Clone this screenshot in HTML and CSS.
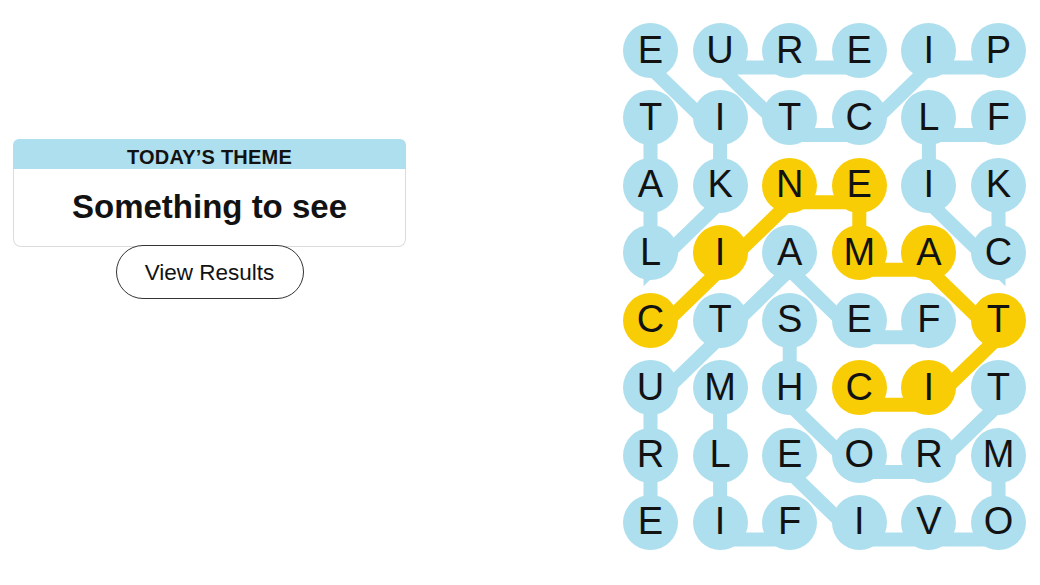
FILE: index.html
```html
<!DOCTYPE html>
<html lang="en">
<head>
  <meta charset="UTF-8">
  <title>Strands</title>
  <link rel="stylesheet" href="styles.css">
</head>
<body>
  <div id="game">
    <!-- Tema del día -->
    <div id="theme-panel">
      <div class="theme-card">
        <div class="theme-label">TODAY’S THEME</div>
        <div class="theme-title">Something to see</div>
      </div>
      <button class="results-button">View Results</button>
    </div>

    <!-- Tablero -->
    <div id="board">
      <svg class="paths" width="403" height="527" viewBox="0 0 403 527">
        <polyline class="path" points="27.5,111.93 27.5,179.36 27.5,246.79 97.1,179.36 97.1,111.93 27.5,44.5"/>
        <polyline class="path" points="375.5,111.93 305.9,111.93 305.9,179.36 375.5,246.79 375.5,179.36"/>
        <polyline class="path" points="375.5,44.5 305.9,44.5 236.3,111.93 166.7,111.93 97.1,44.5 166.7,44.5 236.3,44.5"/>
        <polyline class="path" points="305.9,314.22 236.3,314.22 166.7,246.79 97.1,314.22 27.5,381.65 27.5,449.08 27.5,516.51"/>
        <polyline class="path" points="166.7,314.22 166.7,381.65 236.3,449.08 305.9,449.08 375.5,381.65"/>
        <polyline class="path" points="375.5,449.08 375.5,516.51 305.9,516.51 236.3,516.51 166.7,449.08"/>
        <polyline class="path" points="166.7,516.51 97.1,516.51 97.1,449.08 97.1,381.65"/>
        <polyline class="path spangram" points="27.5,314.22 97.1,246.79 166.7,179.36 236.3,179.36 236.3,246.79 305.9,246.79 375.5,314.22 305.9,381.65 236.3,381.65"/>
      </svg>
      <div class="grid">
        <div class="cell">E</div><div class="cell">U</div><div class="cell">R</div><div class="cell">E</div><div class="cell">I</div><div class="cell">P</div>
        <div class="cell">T</div><div class="cell">I</div><div class="cell">T</div><div class="cell">C</div><div class="cell">L</div><div class="cell">F</div>
        <div class="cell">A</div><div class="cell">K</div><div class="cell span">N</div><div class="cell span">E</div><div class="cell">I</div><div class="cell">K</div>
        <div class="cell">L</div><div class="cell span">I</div><div class="cell">A</div><div class="cell span">M</div><div class="cell span">A</div><div class="cell">C</div>
        <div class="cell span">C</div><div class="cell">T</div><div class="cell">S</div><div class="cell">E</div><div class="cell">F</div><div class="cell span">T</div>
        <div class="cell">U</div><div class="cell">M</div><div class="cell">H</div><div class="cell span">C</div><div class="cell span">I</div><div class="cell">T</div>
        <div class="cell">R</div><div class="cell">L</div><div class="cell">E</div><div class="cell">O</div><div class="cell">R</div><div class="cell">M</div>
        <div class="cell">E</div><div class="cell">I</div><div class="cell">F</div><div class="cell">I</div><div class="cell">V</div><div class="cell">O</div>
      </div>
    </div>
  </div>
</body>
</html>
```

FILE: styles.css
```css
/* Página */
body {
  margin: 0;
  background: #ffffff;
  color: #121212;
  font-family: "Liberation Sans", Arial, sans-serif;
}

#game {
  display: flex;
  align-items: flex-start;
  gap: 217px;
  padding-left: 13px;
}

/* Panel del tema */
#theme-panel {
  width: 393px;
  padding-top: 139px;
  display: flex;
  flex-direction: column;
  align-items: center;
}
.theme-card {
  width: 100%;
}
.theme-label {
  height: 30px;
  background-color: #aedfee;
  border-radius: 6px 6px 0 0;
  font-size: 20px;
  font-weight: bold;
  letter-spacing: 0.2px;
  text-align: center;
  line-height: 36px;
}
.theme-title {
  height: 78px;
  border: 1px solid #dcdcdc;
  border-top: none;
  border-radius: 0 0 8px 8px;
  display: flex;
  align-items: center;
  justify-content: center;
  font-size: 33px;
  font-weight: bold;
  padding-bottom: 1px;
  box-sizing: border-box;
}
.results-button {
  margin-top: -2px;
  width: 188px;
  height: 54px;
  border: 1px solid #333333;
  border-radius: 27px;
  background: #ffffff;
  color: #121212;
  font-family: "Liberation Sans", Arial, sans-serif;
  font-size: 22.5px;
  padding-top: 3px;
  cursor: pointer;
}

/* Tablero */
#board {
  position: relative;
  margin-top: 23px;
}
.paths {
  position: absolute;
  top: 0;
  left: 0;
}
.path {
  fill: none;
  stroke: #aedfee;
  stroke-width: 14;
  stroke-linejoin: miter;
}
.path.spangram {
  stroke: #f8cd05;
}
.grid {
  position: relative;
  display: grid;
  grid-template-columns: repeat(6, 55px);
  grid-auto-rows: 55px;
  column-gap: 14.6px;
  row-gap: 12.43px;
}
.cell {
  display: flex;
  align-items: center;
  justify-content: center;
  border-radius: 50%;
  background-color: #aedfee;
  font-size: 38px;
  line-height: 1;
  padding-bottom: 2px;
  box-sizing: border-box;
}
.cell.span {
  background-color: #f8cd05;
}
```
